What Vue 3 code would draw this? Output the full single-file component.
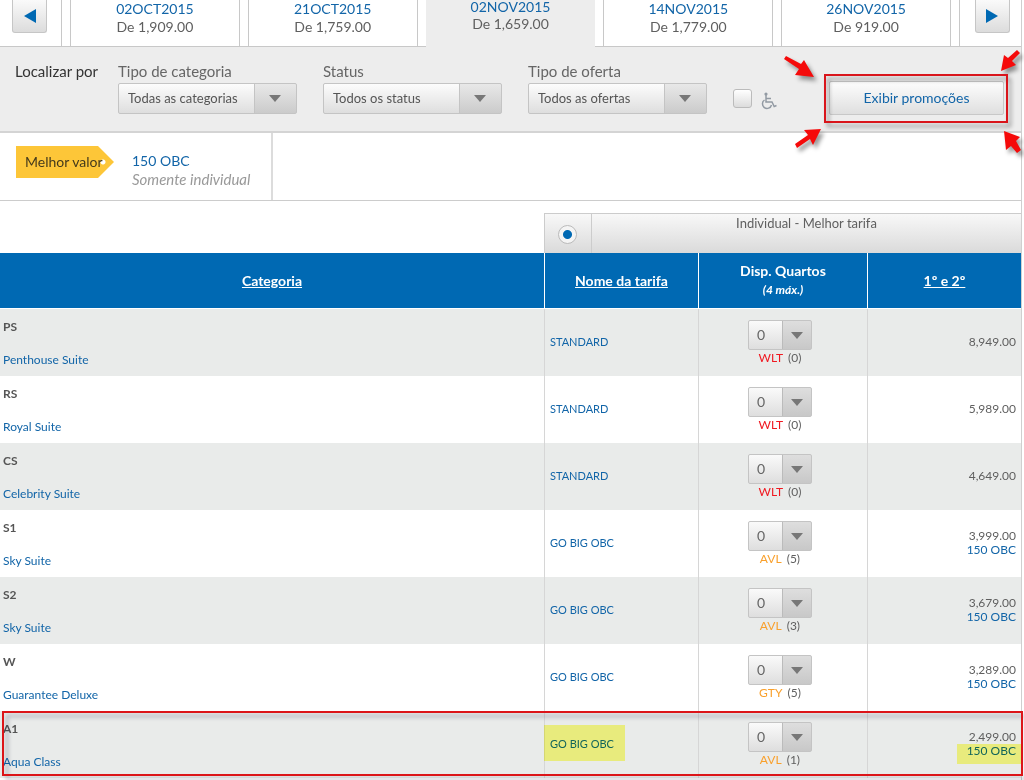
<script setup>
import { ref } from 'vue'

const dates = [
  { date: '02OCT2015', price: 'De 1,909.00' },
  { date: '21OCT2015', price: 'De 1,759.00' },
  { date: '02NOV2015', price: 'De 1,659.00', active: true },
  { date: '14NOV2015', price: 'De 1,779.00' },
  { date: '26NOV2015', price: 'De 919.00' },
]

const filters = [
  { id: 'category', label: 'Tipo de categoria', value: 'Todas as categorias' },
  { id: 'status', label: 'Status', value: 'Todos os status' },
  { id: 'offer', label: 'Tipo de oferta', value: 'Todos as ofertas' },
]

const rows = [
  { code: 'PS', name: 'Penthouse Suite', fare: 'STANDARD', status: 'WLT', count: 0, price: '8,949.00' },
  { code: 'RS', name: 'Royal Suite', fare: 'STANDARD', status: 'WLT', count: 0, price: '5,989.00' },
  { code: 'CS', name: 'Celebrity Suite', fare: 'STANDARD', status: 'WLT', count: 0, price: '4,649.00' },
  { code: 'S1', name: 'Sky Suite', fare: 'GO BIG OBC', status: 'AVL', count: 5, price: '3,999.00', bonus: '150 OBC' },
  { code: 'S2', name: 'Sky Suite', fare: 'GO BIG OBC', status: 'AVL', count: 3, price: '3,679.00', bonus: '150 OBC' },
  { code: 'W', name: 'Guarantee Deluxe', fare: 'GO BIG OBC', status: 'GTY', count: 5, price: '3,289.00', bonus: '150 OBC' },
  { code: 'A1', name: 'Aqua Class', fare: 'GO BIG OBC', status: 'AVL', count: 1, price: '2,499.00', bonus: '150 OBC', marked: true },
]

const accessible = ref(false)
const fareType = ref('individual')
</script>

<template>
  <div class="page">
    <nav class="dates" aria-label="Datas">
      <div class="edge prev">
        <button class="step" type="button" aria-label="Anterior">
          <svg width="12" height="14" viewBox="0 0 12 14"><path d="M12 0V14L0 7Z" fill="#0069b3" /></svg>
        </button>
      </div>
      <a v-for="d in dates" :key="d.date" href="#" class="tab" :class="{ active: d.active }">
        <span class="tab-date">{{ d.date }}</span>
        <span class="tab-price">{{ d.price }}</span>
      </a>
      <div class="edge next">
        <button class="step" type="button" aria-label="Próximo">
          <svg width="12" height="14" viewBox="0 0 12 14"><path d="M0 0V14L12 7Z" fill="#0069b3" /></svg>
        </button>
      </div>
    </nav>

    <form class="filters" @submit.prevent>
      <span class="filters-title">Localizar por</span>
      <div v-for="f in filters" :key="f.id" class="field">
        <label :for="f.id">{{ f.label }}</label>
        <div class="select-wrap">
          <select :id="f.id" class="select wide"><option>{{ f.value }}</option></select>
          <svg class="caret wide-caret" width="12" height="7" viewBox="0 0 12 7"><path d="M0 0H12L6 7Z" fill="#777" /></svg>
        </div>
      </div>
      <div class="access">
        <input id="access" v-model="accessible" type="checkbox" aria-label="Acessível" />
        <label for="access">
          <svg width="16" height="18" viewBox="0 0 16 18" fill="none" stroke="#929aa3" stroke-width="1.5">
            <circle cx="5" cy="2" r="1.6" fill="#929aa3" stroke="none" />
            <path d="M5 3V10H11L13.200 14.500L15.500 13.500M5 6.500H10" />
            <path d="M3.500 8A4.600 4.600 0 1 0 10.500 13" />
          </svg>
        </label>
      </div>
      <div class="promo">
        <button type="button" class="promo-button">Exibir promoções</button>
        <svg class="callout" width="243" height="112" viewBox="781 43 243 112" aria-hidden="true">
          <rect x="825" y="75" width="182" height="47" fill="none" stroke="#d9151b" stroke-width="2" />
          <g fill="#f50a0a">
            <path d="M786 56L801 64L804 60L814 77L795 75L799 69L784 59Z" />
            <path d="M1017 50L1020 53L1012 61L1016 65L1001 71L1004 55L1008 58Z" />
            <path d="M795 144L808 135L804 130L821 129L813 145L810 139L797 148Z" />
            <path d="M1004 131L1020 137L1016 141L1021 150L1017 153L1011 146L1006 150Z" />
          </g>
        </svg>
      </div>
    </form>

    <section class="offers">
      <div class="offer">
        <span class="tag">Melhor valor</span>
        <div class="offer-text">
          <a href="#">150 OBC</a>
          <em>Somente individual</em>
        </div>
      </div>
    </section>

    <table class="fares">
      <colgroup>
        <col /><col class="c-radio" /><col class="c-name" /><col class="c-rooms" /><col class="c-price" />
      </colgroup>
      <thead>
        <tr class="group">
          <td class="blank"></td>
          <td class="radio-cell">
            <input id="individual" v-model="fareType" type="radio" name="fare" value="individual" />
          </td>
          <th colspan="3" class="group-title"><label for="individual">Individual - Melhor tarifa</label></th>
        </tr>
        <tr class="head">
          <th><a href="#">Categoria</a></th>
          <th colspan="2"><a href="#">Nome da tarifa</a></th>
          <th>Disp. Quartos<small>(4 máx.)</small></th>
          <th><a href="#">1º e 2º</a></th>
        </tr>
      </thead>
      <tbody>
        <tr v-for="r in rows" :key="r.code" :class="{ marked: r.marked }">
          <td class="category">
            <strong>{{ r.code }}</strong>
            <a href="#">{{ r.name }}</a>
            <span v-if="r.marked" class="frame"></span>
          </td>
          <td colspan="2" class="fare">
            <a href="#" :class="{ lit: r.marked }">{{ r.fare }}</a>
          </td>
          <td class="rooms">
            <div class="select-wrap">
              <select class="select small" :aria-label="'Quartos ' + r.code"><option>0</option></select>
              <svg class="caret small-caret" width="12" height="7" viewBox="0 0 12 7"><path d="M0 0H12L6 7Z" fill="#777" /></svg>
            </div>
            <div class="avail"><span :class="r.status === 'WLT' ? 'red' : 'orange'">{{ r.status }}</span> ({{ r.count }})</div>
          </td>
          <td class="price">
            {{ r.price }}
            <a v-if="r.bonus" href="#" :class="{ lit: r.marked }">{{ r.bonus }}</a>
          </td>
        </tr>
      </tbody>
    </table>
  </div>
</template>

<style>
body { background: #fff; }
</style>

<style scoped>
.page {
  box-sizing: border-box;
  min-height: 100vh;
  margin-right: 2px;
  border-right: 1px solid #cfcfcf;
  font-family: Lato, "Liberation Sans", sans-serif;
  font-size: 13px;
  color: #5f5f5f;
}
.page, .page * { box-sizing: border-box; }
a { color: #1265a8; text-decoration: none; }
button, select { font-family: inherit; }

.dates {
  display: flex;
  gap: 8px;
  height: 47px;
  border-bottom: 1px solid #c8c8c8;
}
.edge { flex: 0 0 62px; display: flex; align-items: flex-start; }
.prev { border-right: 1px solid #c8c8c8; padding-left: 12px; }
.next { border-left: 1px solid #c8c8c8; padding-left: 15px; }
.step {
  width: 35px;
  height: 33px;
  padding: 0;
  border: 1px solid #c6c6c6;
  border-top: 0;
  border-radius: 0 0 3px 3px;
  background: linear-gradient(#fafafa, #dcdcdc);
  display: grid;
  place-items: center;
}
.tab {
  flex: 1;
  display: flex;
  flex-direction: column;
  align-items: center;
  justify-content: flex-end;
  padding-bottom: 10px;
  border: solid #c8c8c8;
  border-width: 0 1px;
  font-size: 14px;
  line-height: 18px;
}
.tab-price { color: #5f5f5f; }
.tab.active {
  margin-bottom: -1px;
  padding-bottom: 15px;
  background: #ededed;
  border-color: #ededed;
  line-height: 17px;
}

.filters {
  display: flex;
  height: 86px;
  padding: 15px 17px 0 15px;
  background: #ededed;
  border-bottom: 2px solid #d4d4d4;
}
.filters-title { width: 103px; font-size: 15px; line-height: 18px; color: #333; }
.field { width: 179px; margin-right: 26px; }
.field label { display: block; height: 21px; font-size: 15px; line-height: 18px; color: #666; }
.select-wrap { position: relative; }
.select {
  appearance: none;
  display: block;
  margin: 0;
  border: 1px solid #c4c4c4;
  border-radius: 2px;
  color: #555;
  font-size: 13px;
  background-repeat: no-repeat;
}
.wide {
  width: 100%;
  height: 31px;
  padding: 0 50px 1px 9px;
  background-image: linear-gradient(#c4c4c4, #c4c4c4), linear-gradient(#e8e8e8, #cbcbcb), linear-gradient(#fcfcfc, #dedede);
  background-size: 1px 100%, 41px 100%, 100% 100%;
  background-position: right 41px top, right top, left top;
}
.small {
  width: 64px;
  height: 30px;
  padding: 0 0 2px 8px;
  font-size: 14px;
  color: #666;
  background-image: linear-gradient(#bbb, #bbb), linear-gradient(#dedede, #c8c8c8), linear-gradient(#fafafa, #dedede);
  background-size: 1px 100%, 28px 100%, 100% 100%;
  background-position: right 28px top, right top, left top;
}
.caret { position: absolute; pointer-events: none; }
.wide-caret { right: 16px; top: 12px; }
.small-caret { right: 9px; top: 12px; }

.access { display: flex; gap: 9px; padding-top: 27px; }
.access input {
  appearance: none;
  width: 19px;
  height: 19px;
  margin: 0;
  border: 1px solid #bbb;
  border-radius: 3px;
  background: linear-gradient(#fff, #dcdcdc);
}
.access label { padding-top: 3px; }
.access svg { display: block; }
.promo { position: relative; width: 175px; height: 34px; margin: 19px 0 0 auto; }
.promo-button {
  width: 100%;
  height: 100%;
  padding: 0 0 2px;
  border: 1px solid #c8c8c8;
  border-radius: 2px;
  background: linear-gradient(#fdfdfd, #dfdfdf);
  color: #1265a8;
  font-size: 14px;
}
.callout {
  position: absolute;
  left: -48px;
  top: -38px;
  pointer-events: none;
  filter: drop-shadow(3px 4px 2px rgba(0, 0, 0, 0.4));
}

.offers { height: 68px; border-bottom: 1px solid #ccc; }
.offer {
  display: flex;
  gap: 18px;
  width: 273px;
  height: 100%;
  padding: 13px 0 0 16px;
  border-right: 2px solid #dcdcdc;
}
.tag {
  flex: none;
  width: 98px;
  height: 32px;
  padding-left: 9px;
  background: radial-gradient(circle at 87px 16px, #fff 0 2px, #fdc638 3px);
  clip-path: polygon(0 0, 82px 0, 100% 50%, 82px 100%, 0 100%);
  color: #443a1c;
  font-size: 14px;
  line-height: 32px;
}
.offer-text { padding-top: 6px; font-size: 14px; line-height: 18px; }
.offer-text a, .offer-text em { display: block; }
.offer-text em { color: #999; font-size: 15px; white-space: nowrap; }

.fares {
  width: 100%;
  margin-top: 12px;
  border-collapse: separate;
  border-spacing: 0;
  table-layout: fixed;
}
.c-radio { width: 47px; }
.c-name { width: 107px; }
.c-rooms { width: 169px; }
.c-price { width: 154px; }
.fares td, .fares th { padding: 0; }
.group { height: 40px; }
.radio-cell, .group-title {
  border: 1px solid #ccc;
  border-width: 1px 0 0 1px;
  background: linear-gradient(#f8f8f8, #dadada);
}
.radio-cell { text-align: center; vertical-align: middle; }
.radio-cell input {
  appearance: none;
  display: block;
  width: 19px;
  height: 19px;
  margin: 2px auto 0;
  border: 1px solid #bbb;
  border-radius: 50%;
  background: linear-gradient(#fff, #e4e4e4);
}
.radio-cell input:checked {
  background: radial-gradient(circle, #0069b3 0 4px, #f4f4f4 5px);
}
.group-title { vertical-align: top; font-weight: 400; font-size: 13px; line-height: 18px; }
.head { height: 56px; }
.head th {
  background: #0069b3;
  border-bottom: 1px solid #fff;
  color: #fff;
  font-size: 14px;
  line-height: 18px;
}
.head th + th { border-left: 1px solid #fff; }
.head a { color: #fff; text-decoration: underline; }
.head small { display: block; font-size: 12px; line-height: 20px; font-style: italic; }

tbody tr { height: 67px; }
tbody tr:nth-child(odd) { background: #e9ebea; }
tbody td + td { border-left: 1px solid #d6d6d6; }
.category { line-height: 16px; vertical-align: middle; }
.fares .category { padding: 2px 0 0 3px; }
.category strong { display: block; margin-bottom: 17px; font-size: 12px; color: #555; }
.category a { display: block; font-size: 12px; }
.fares .fare { padding: 0 0 2px 5px; font-size: 11px; }
.rooms .select-wrap { width: 64px; margin: 0 auto; }
.rooms { text-align: center; }
.fares .rooms { padding-right: 6px; }
.avail { font-size: 12px; line-height: 15px; }
.avail span { margin-right: 2px; }
.red { color: #f01820; }
.orange { color: #f9a02c; }
.fares .price { padding: 0 5px 2px 0; text-align: right; font-size: 12px; line-height: 14px; }
.price a { display: block; }
.marked { position: relative; }
.lit { position: relative; }
.lit::after {
  content: "";
  position: absolute;
  background: #feff88;
  mix-blend-mode: multiply;
}
.fare .lit::after { inset: -12px -11px -11px -6px; }
.price .lit::after { inset: 0 -5px -6px auto; width: 64px; }
.frame {
  position: absolute;
  inset: 0 -2px 2px 2px;
  border: 2px solid #dc1519;
  filter: drop-shadow(4px 4px 2px rgba(0, 0, 40, 0.3));
  pointer-events: none;
}
</style>
